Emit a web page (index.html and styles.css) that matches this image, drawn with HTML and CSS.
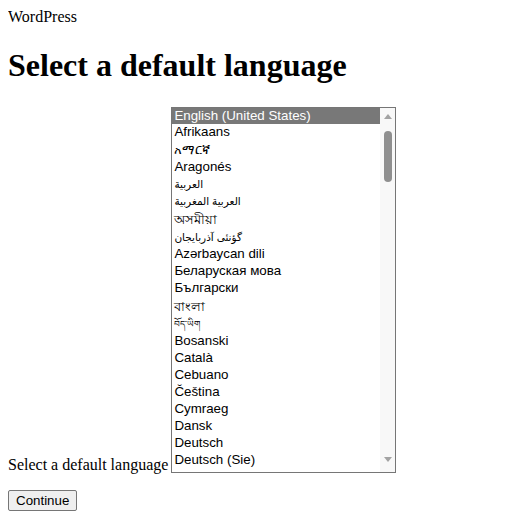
FILE: index.html
```html
<!DOCTYPE html>
<html lang="en">
<head>
<meta charset="utf-8">
<title>WordPress › Setup Configuration File</title>
<link rel="stylesheet" href="styles.css">
</head>
<body>
<div class="logo">WordPress</div>
<h1 class="title">Select a default language</h1>
<form class="setup">
  <div class="row">
    <label class="label" for="language">Select a default language</label>
    <div class="listbox" id="language" role="listbox">
      <div class="options">
        <div class="opt sel h16">English (United States)</div>
        <div class="opt">Afrikaans</div>
        <div class="opt h18">አማርኛ</div>
        <div class="opt">Aragonés</div>
        <div class="opt ar">العربية</div>
        <div class="opt ar">العربية المغربية</div>
        <div class="opt h19">অসমীয়া</div>
        <div class="opt ar">گؤنئی آذربایجان</div>
        <div class="opt">Azərbaycan dili</div>
        <div class="opt">Беларуская мова</div>
        <div class="opt">Български</div>
        <div class="opt h19">বাংলা</div>
        <div class="opt small">བོད་ཡིག</div>
        <div class="opt">Bosanski</div>
        <div class="opt">Català</div>
        <div class="opt">Cebuano</div>
        <div class="opt">Čeština</div>
        <div class="opt">Cymraeg</div>
        <div class="opt">Dansk</div>
        <div class="opt">Deutsch</div>
        <div class="opt">Deutsch (Sie)</div>
        <div class="opt">Deutsch (Schweiz, Du)</div>
      </div>
      <div class="scrollbar">
        <div class="arrow up"></div>
        <div class="thumb"></div>
        <div class="track-rest"></div>
        <div class="arrow down"></div>
      </div>
    </div>
  </div>
  <p class="submit"><button type="button" class="btn">Continue</button></p>
</form>
</body>
</html>
```
FILE: styles.css
```css
html, body {
  background: #fff;
  color: #000;
}
body {
  margin: 8px;
  font-family: "Liberation Serif", "Times New Roman", serif;
  font-size: 16px;
}
.logo {
  line-height: 18px;
}
.title {
  font-size: 32px;
  font-weight: bold;
  line-height: 37px;
  margin: 21px 0 23px;
}
.setup {
  margin: 0;
}
.row {
  display: flex;
  align-items: flex-end;
}
.label {
  line-height: 18px;
  margin-right: 3px;
  margin-bottom: -1px;
}
.listbox {
  display: flex;
  width: 223px;
  height: 364px;
  border: 1px solid #767676;
  background: #fff;
  font-family: "Liberation Sans", Arial, "DejaVu Sans", sans-serif;
  font-size: 13.333px;
}
.options {
  flex: 1;
  overflow: hidden;
}
.opt {
  height: 17px;
  line-height: 16px;
  padding: 0 2px;
  white-space: nowrap;
  overflow: hidden;
}
.opt.h16 { height: 16px; }
.opt.h18 { height: 18px; line-height: 18px; }
.opt.h19 { height: 19px; line-height: 19px; }
.opt.ar { font-size: 10.5px; }
.opt.small { font-size: 9px; }
.opt.sel {
  background: #787878;
  color: #fff;
}
.scrollbar {
  width: 15px;
  background: #f8f8f8;
  display: flex;
  flex-direction: column;
  align-items: center;
}
.arrow {
  width: 0;
  height: 0;
  border-left: 4.5px solid transparent;
  border-right: 4.5px solid transparent;
}
.arrow.up {
  margin-top: 6px;
  border-bottom: 5px solid #a3a3a3;
}
.arrow.down {
  margin-bottom: 10px;
  border-top: 5px solid #a3a3a3;
}
.thumb {
  width: 8px;
  height: 51px;
  margin-top: 12px;
  border-radius: 4px;
  background: #8f8f8f;
}
.track-rest {
  flex: 1;
}
.submit {
  margin: 17px 0 16px;
}
.btn {
  height: 21px;
  padding: 1px 7px;
  margin: 0;
  font-family: "Liberation Sans", Arial, sans-serif;
  font-size: 13.333px;
  color: #000;
  background: #efefef;
  border: 1px solid #767676;
  border-radius: 2px;
}
```
